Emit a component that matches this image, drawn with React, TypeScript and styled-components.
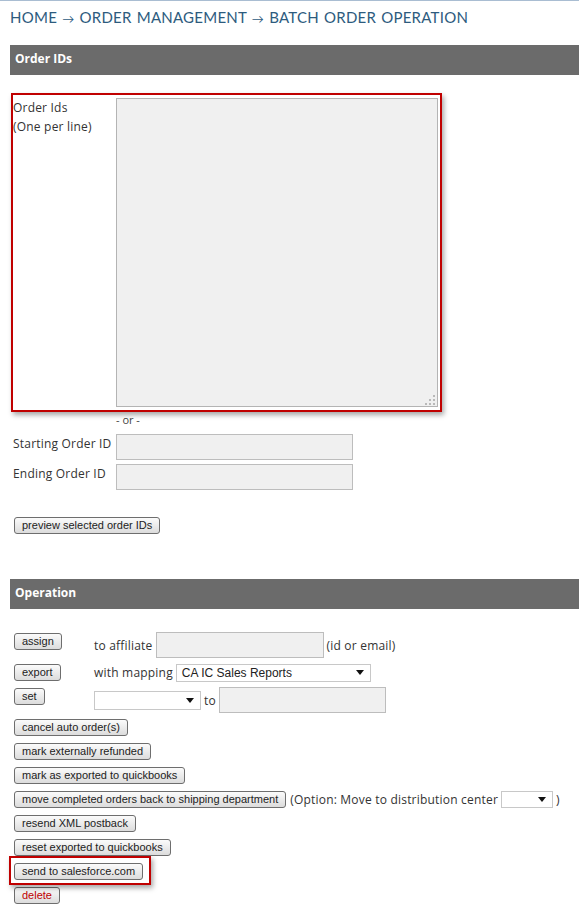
import React from "react";
import styled, { createGlobalStyle } from "styled-components";

const GlobalStyle = createGlobalStyle`
  html, body {
    margin: 0;
    padding: 0;
    background: #ffffff;
  }
  body {
    font-family: "Open Sans", "DejaVu Sans", sans-serif;
    color: #333333;
  }
`;

const CaretDown = () => (
  <svg width="8" height="5" viewBox="0 0 8 5">
    <path d="M0 0 H8 L4 5 Z" fill="#111" />
  </svg>
);

const ResizeGrip = () => (
  <svg width="11" height="11" viewBox="0 0 11 11">
    <g fill="#b9b9b9">
      <rect x="8" y="0" width="2" height="2" />
      <rect x="4" y="4" width="2" height="2" />
      <rect x="8" y="4" width="2" height="2" />
      <rect x="0" y="8" width="2" height="2" />
      <rect x="4" y="8" width="2" height="2" />
      <rect x="8" y="8" width="2" height="2" />
    </g>
  </svg>
);

const App = () => {
  return (
    <>
      <GlobalStyle />
      <Page>
        <Breadcrumb>
          HOME <Arrow>→</Arrow> ORDER MANAGEMENT <Arrow>→</Arrow> BATCH ORDER
          OPERATION
        </Breadcrumb>

        <SectionHeader>Order IDs</SectionHeader>
        <SectionBody>
          <Annotated inset="-5px -4px -5px -2px">
            <FormRow>
              <Label>
                Order Ids
                <br />
                (One per line)
              </Label>
              <TextAreaWrap>
                <IdsArea />
                <GripSpot>
                  <ResizeGrip />
                </GripSpot>
              </TextAreaWrap>
            </FormRow>
          </Annotated>

          <OrLine>- or -</OrLine>

          <FieldStack>
            <FormRow>
              <Label>Starting Order ID</Label>
              <TextInput width={237} height={26} />
            </FormRow>
            <FormRow>
              <Label>Ending Order ID</Label>
              <TextInput width={237} height={26} />
            </FormRow>
          </FieldStack>

          <PreviewButton>preview selected order IDs</PreviewButton>
        </SectionBody>

        <SectionHeader>Operation</SectionHeader>
        <OperationBody>
          <OpRow>
            <ButtonCell>
              <OpButton>assign</OpButton>
            </ButtonCell>
            <Fields>
              <Text>to affiliate</Text>
              <TextInput width={168} height={26} />
              <Text>(id or email)</Text>
            </Fields>
          </OpRow>
          <OpRow>
            <ButtonCell>
              <OpButton>export</OpButton>
            </ButtonCell>
            <Fields>
              <Text>with mapping</Text>
              <Select width={195} height={18}>
                <span>CA IC Sales Reports</span>
                <CaretDown />
              </Select>
            </Fields>
          </OpRow>
          <OpRow>
            <ButtonCell>
              <OpButton>set</OpButton>
            </ButtonCell>
            <Fields>
              <Select width={107} height={19}>
                <span />
                <CaretDown />
              </Select>
              <Text>to</Text>
              <TextInput width={167} height={26} />
            </Fields>
          </OpRow>
          <OpRow>
            <OpButton>cancel auto order(s)</OpButton>
          </OpRow>
          <OpRow>
            <OpButton>mark externally refunded</OpButton>
          </OpRow>
          <OpRow>
            <OpButton>mark as exported to quickbooks</OpButton>
          </OpRow>
          <OpRow>
            <OpButton>move completed orders back to shipping department</OpButton>
            <Fields>
              <Text>(Option: Move to distribution center</Text>
              <Select width={52} height={17}>
                <span />
                <CaretDown />
              </Select>
              <Text>)</Text>
            </Fields>
          </OpRow>
          <OpRow>
            <OpButton>resend XML postback</OpButton>
          </OpRow>
          <OpRow>
            <OpButton>reset exported to quickbooks</OpButton>
          </OpRow>
          <OpRow>
            <Annotated inset="-6px -4px -5px -5px">
              <OpButton>send to salesforce.com</OpButton>
            </Annotated>
          </OpRow>
          <OpRow>
            <OpButton danger>delete</OpButton>
          </OpRow>
        </OperationBody>
      </Page>
    </>
  );
};

const Page = styled.div`
  width: 579px;
  min-height: 923px;
  border-top: 1px solid #a9bdd2;
  padding-left: 10px;
  box-sizing: border-box;
  overflow: hidden;
`;

const Breadcrumb = styled.div`
  padding-top: 7px;
  margin-bottom: 19px;
  height: 18px;
  font-family: Lato, "Open Sans", sans-serif;
  font-size: 15px;
  line-height: 18px;
  letter-spacing: 0.25px;
  word-spacing: 1px;
  color: #2d5b7e;
  white-space: nowrap;
`;

const Arrow = styled.span`
  font-size: 12px;
  color: #2d5b7e;
`;

const SectionHeader = styled.div`
  height: 30px;
  margin-right: -10px;
  padding-left: 5px;
  background: #6b6b6b;
  color: #ffffff;
  font-family: "Open Sans", "DejaVu Sans", sans-serif;
  font-weight: 700;
  font-size: 12px;
  line-height: 28px;
`;

const SectionBody = styled.div`
  padding: 23px 0 45px 3px;
`;

const Annotated = styled.div<{ inset: string }>`
  position: relative;
  display: inline-block;
  vertical-align: top;
  &::after {
    content: "";
    position: absolute;
    inset: ${(props) => props.inset};
    border: 2px solid #c00000;
    box-shadow: 2px 3px 5px rgba(0, 0, 0, 0.35);
    pointer-events: none;
  }
`;

const FieldStack = styled.div`
  display: flex;
  flex-direction: column;
  gap: 4px;
`;

const FormRow = styled.div`
  display: flex;
  align-items: flex-start;
`;

const Label = styled.div`
  width: 103px;
  font-size: 12px;
  line-height: 19px;
  color: #333333;
  letter-spacing: 0.2px;
`;

const TextAreaWrap = styled.div`
  position: relative;
  width: 322px;
  height: 309px;
`;

const IdsArea = styled.textarea`
  display: block;
  width: 100%;
  height: 100%;
  box-sizing: border-box;
  border: 1px solid #b4b4b4;
  background: #f0f0f0;
  resize: none;
  outline: none;
  margin: 0;
`;

const GripSpot = styled.div`
  position: absolute;
  right: 2px;
  bottom: 1px;
  line-height: 0;
`;

const OrLine = styled.div`
  margin: 5px 0 6px 103px;
  height: 16px;
  font-size: 11px;
  line-height: 16px;
  color: #444444;
`;

const TextInput = styled.input<{ width: number; height: number }>`
  width: ${(props) => props.width}px;
  height: ${(props) => props.height}px;
  box-sizing: border-box;
  margin: 0;
  border: 1px solid #bdbdbd;
  background: #f0f0f0;
  outline: none;
`;

const Button = styled.button`
  display: block;
  height: 17px;
  box-sizing: border-box;
  margin: 0;
  padding: 0 7px;
  border: 1px solid #6e6e6e;
  border-radius: 3px;
  background: linear-gradient(#fbfbfb, #dcdcdc);
  font-family: "Liberation Sans", Arial, sans-serif;
  font-size: 11px;
  line-height: 15px;
  color: #222222;
  white-space: nowrap;
`;

const PreviewButton = styled(Button)`
  margin: 27px 0 0 1px;
`;

const OperationBody = styled.div`
  display: flex;
  flex-direction: column;
  gap: 5px;
  padding: 23px 0 0 4px;
`;

const OpRow = styled.div`
  display: flex;
  align-items: flex-start;
  min-height: 19px;
`;

const ButtonCell = styled.div`
  flex: none;
  width: 80px;
`;

const OpButton = styled(Button)<{ danger?: boolean }>`
  margin-top: 1px;
  margin-right: 4px;
  color: ${(props) => (props.danger ? "#c00000" : "#222222")};
`;

const Fields = styled.div`
  display: flex;
  align-items: center;
  gap: 3px;
`;

const Text = styled.span`
  font-size: 12px;
  line-height: 19px;
  color: #333333;
  letter-spacing: 0.2px;
  white-space: nowrap;
`;

const Select = styled.div<{ width: number; height: number }>`
  display: flex;
  align-items: center;
  justify-content: space-between;
  width: ${(props) => props.width}px;
  height: ${(props) => props.height}px;
  box-sizing: border-box;
  padding: 0 6px 0 5px;
  border: 1px solid #c8c8c8;
  background: #ffffff;
  font-family: "Liberation Sans", Arial, sans-serif;
  font-size: 12px;
  color: #222222;
`;

export default App;
